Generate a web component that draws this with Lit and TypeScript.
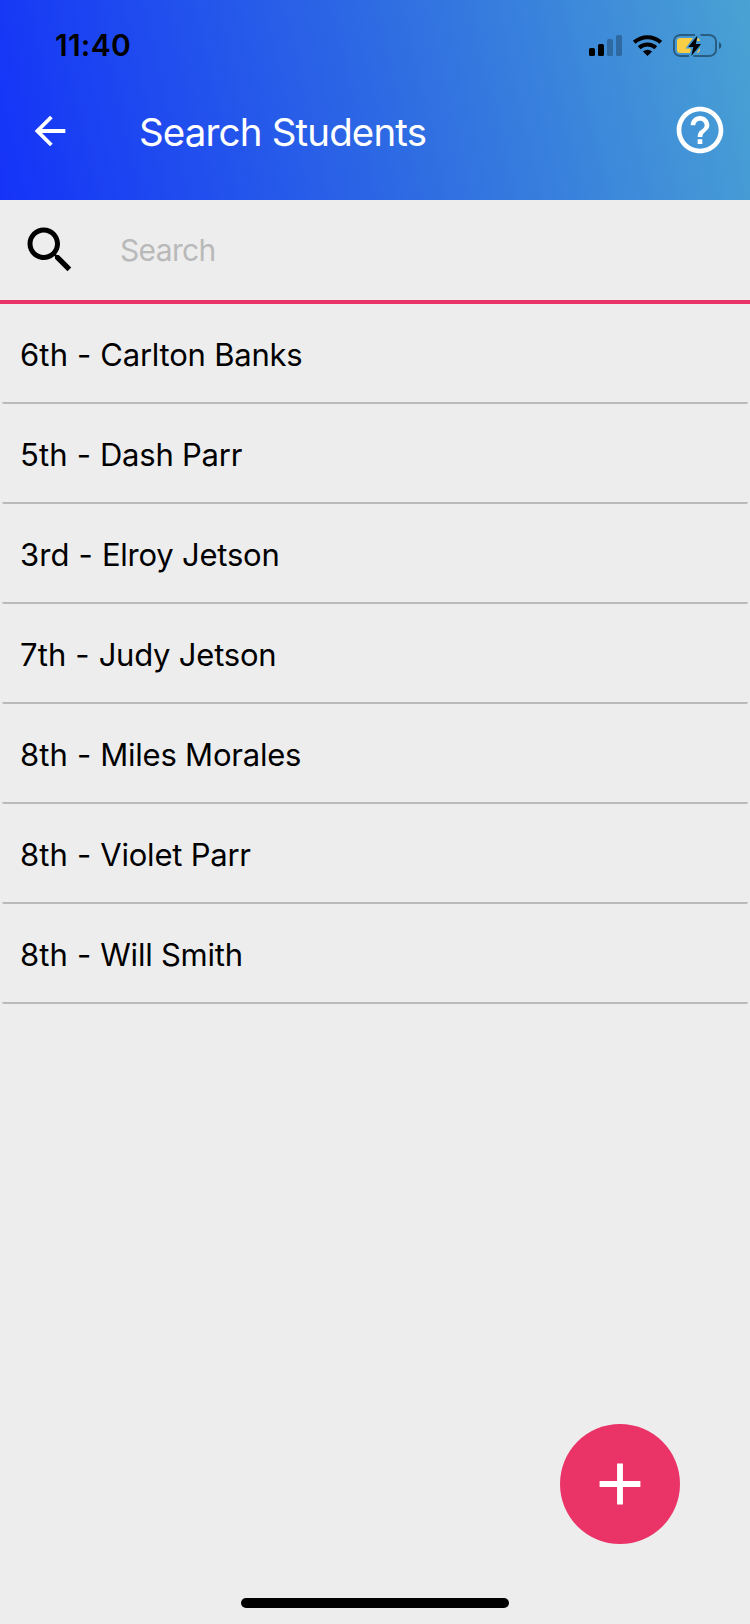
import { LitElement, html, css, svg } from "lit";
import { customElement, property } from "lit/decorators.js";

@customElement("status-bar")
class StatusBar extends LitElement {
  static styles = css`
    :host { display: flex; height: 60px; justify-content: space-between; align-items: flex-start; }
    .time { margin: 27px 0 0 55px; font-size: 30px; line-height: 36px; font-weight: 600; color: #000; letter-spacing: 0.25px; }
    .icons { margin: 30px 26px 0 0; width: 136px; height: 32px; }
  `;
  render() {
    return html`
      <span class="time">11:40</span>
      <svg class="icons" viewBox="0 0 136 32">
        <rect x="1" y="18" width="6" height="8" rx="1.6" />
        <rect x="10" y="14" width="6" height="12" rx="1.6" />
        <g opacity=".25">
          <rect x="19" y="9" width="6" height="17" rx="1.6" />
          <rect x="28" y="5" width="6" height="21" rx="1.6" />
        </g>
        <g fill="none" stroke="#000" stroke-width="4">
          <path d="M46.2 12.2 A20 20 0 0 1 72.8 12.2" />
          <path d="M51.2 17.8 A12.4 12.4 0 0 1 67.8 17.8" />
        </g>
        <path d="M59.5 26 L54.9 21.4 A7 7 0 0 1 64.1 21.4 Z" />
        <path d="M107 5 H92 A7 6 0 0 0 86 11 V20 A7 6 0 0 0 92 26 H101 M112.5 5 H121 A7 6 0 0 1 128 11 V20 A7 6 0 0 1 121 26 H105.5"
          fill="none" stroke="#000" stroke-opacity=".4" stroke-width="2" />
        <path d="M131 12 Q133.4 13 133.4 15.5 Q133.4 18 131 19 Z" opacity=".45" />
        <path d="M105 8 H92 Q89 8 89 11 V20 Q89 23 92 23 H102 L103 18.5 H97.5 Z" fill="#f7ce46" />
        <path d="M109.5 8 Q112 8.4 112 11 L109 11 Z M112 18 Q112.4 22.6 108.6 23 Z" fill="#f7ce46" />
        <path d="M109.5 5.5 L100.3 17 H105.3 L103.3 26 L113 14 H107.8 Z" />
      </svg>`;
  }
}

@customElement("md-icon")
class MdIcon extends LitElement {
  static styles = css`
    :host { display: block; flex: none; }
    svg { display: block; width: 100%; height: 100%; fill: currentColor; }
  `;
  @property() name = "";
  private static paths: Record<string, string> = {
    back: "M20 11H7.83l5.59-5.59L12 4l-8 8 8 8 1.41-1.41L7.83 13H20v-2z",
    help: "M11 18h2v-2h-2v2zm1-16C6.48 2 2 6.48 2 12s4.48 10 10 10 10-4.48 10-10S17.52 2 12 2zm0 18c-4.41 0-8-3.59-8-8s3.59-8 8-8 8 3.59 8 8-3.59 8-8 8zm0-14c-2.21 0-4 1.79-4 4h2c0-1.1.9-2 2-2s2 .9 2 2c0 2-3 1.75-3 5h2c0-2.25 3-2.5 3-5 0-2.21-1.79-4-4-4z",
    search: "M15.5 14h-.79l-.28-.27C15.41 12.59 16 11.11 16 9.5 16 5.91 13.09 3 9.5 3S3 5.91 3 9.5 5.91 16 9.5 16c1.61 0 3.09-.59 4.23-1.57l.27.28v.79l5 4.99L20.49 19l-4.99-5zm-6 0C7.01 14 5 11.99 5 9.5S7.01 5 9.5 5 14 7.01 14 9.5 11.99 14 9.5 14z",
    add: "M19 13h-6v6h-2v-6H5v-2h6V5h2v6h6v2z",
  };
  render() {
    return html`<svg viewBox="0 0 24 24">${svg`<path d=${MdIcon.paths[this.name] ?? ""} />`}</svg>`;
  }
}

interface Student { grade: string; name: string; }

@customElement("app-root")
class AppRoot extends LitElement {
  static styles = css`
    :host {
      display: flex; flex-direction: column; position: relative;
      width: 750px; height: 1624px; overflow: hidden;
      background: #ededed; color: #000;
      font-family: Inter, "Liberation Sans", sans-serif;
    }
    header { height: 200px; flex: none; background: linear-gradient(77deg, #1433f8, #2e6be3 52%, #49a2d3); }
    .bar { display: flex; align-items: center; height: 140px; padding: 0 22px 0 27px; box-sizing: border-box; }
    .back { width: 46px; height: 46px; margin-top: 2px; color: #fff; }
    .title { flex: 1; margin: 3px 0 0 66px; font-size: 38.5px; line-height: 48px; font-weight: 400; color: #fff; letter-spacing: -0.85px; }
    .help { width: 56px; height: 56px; color: #fff; }
    .search { display: flex; align-items: center; height: 104px; flex: none; box-sizing: border-box; padding-left: 20px; border-bottom: 4px solid #ea3468; }
    .lens { width: 60px; height: 60px; }
    .hint { margin-left: 40px; font-size: 30px; color: #b9b9b9; letter-spacing: -0.65px; }
    .list { list-style: none; margin: 0; padding: 0 2px; }
    .row { height: 100px; display: flex; flex-direction: column; }
    .label { flex: 1; display: flex; align-items: center; padding: 2px 18px 0; font-size: 31px; white-space: pre; }
    .grade { letter-spacing: 0.15px; }
    .name { letter-spacing: -0.22px; }
    .rule { height: 2px; background: #bababa; border-radius: 0 0 2px 2px; }
    .fab { position: absolute; right: 70px; bottom: 80px; width: 120px; height: 120px; border-radius: 50%; background: #ea3468; color: #fff; display: grid; place-items: center; }
    .plus { width: 70px; height: 70px; }
    .home { position: absolute; left: 241px; bottom: 16px; width: 268px; height: 10px; border-radius: 5px; background: #000; }
  `;
  private students: Student[] = [
    { grade: "6th", name: "Carlton Banks" },
    { grade: "5th", name: "Dash Parr" },
    { grade: "3rd", name: "Elroy Jetson" },
    { grade: "7th", name: "Judy Jetson" },
    { grade: "8th", name: "Miles Morales" },
    { grade: "8th", name: "Violet Parr" },
    { grade: "8th", name: "Will Smith" },
  ];
  render() {
    return html`
      <header>
        <status-bar></status-bar>
        <div class="bar">
          <md-icon class="back" name="back"></md-icon>
          <span class="title">Search Students</span>
          <md-icon class="help" name="help"></md-icon>
        </div>
      </header>
      <div class="search">
        <md-icon class="lens" name="search"></md-icon>
        <span class="hint">Search</span>
      </div>
      <ul class="list">
        ${this.students.map((s) => html`<li class="row"><div class="label"><span class="grade">${s.grade} - </span><span class="name">${s.name}</span></div><div class="rule"></div></li>`)}
      </ul>
      <div class="fab"><md-icon class="plus" name="add"></md-icon></div>
      <div class="home"></div>`;
  }
}
